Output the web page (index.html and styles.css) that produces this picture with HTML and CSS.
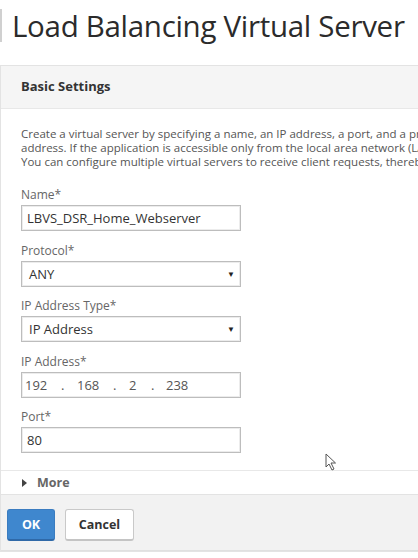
FILE: index.html
```html
<!DOCTYPE html>
<html>
<head>
<meta charset="utf-8">
<link rel="stylesheet" href="styles.css">
</head>
<body>
<div class="page">
  <h1 class="title">Load Balancing Virtual Server</h1>
  <div class="panel">
    <div class="panel-head">Basic Settings</div>
    <div class="panel-body">
      <p class="desc">
        <span class="line">Create a virtual server by specifying a name, an IP address, a port, and a protocol type. If an application is accessible from the Internet, the virtual server IP (VIP) address is a public IP</span>
        <span class="line">address. If the application is accessible only from the local area network (LAN) or wide area network (WAN), the VIP is usually a private (ICANN non-routable) IP address.</span>
        <span class="line">You can configure multiple virtual servers to receive client requests, thereby increasing the availability of resources to process client requests.</span>
      </p>
      <div class="field">
        <div class="label">Name*</div>
        <div class="input">LBVS_DSR_Home_Webserver</div>
      </div>
      <div class="field">
        <div class="label">Protocol*</div>
        <div class="input select">ANY<span class="arrow">▼</span></div>
      </div>
      <div class="field">
        <div class="label">IP Address Type*</div>
        <div class="input select">IP Address<span class="arrow">▼</span></div>
      </div>
      <div class="field">
        <div class="label">IP Address*</div>
        <div class="input ip"><span class="oct w1">192</span><span class="dot">.</span><span class="oct w1">168</span><span class="dot">.</span><span class="oct w2">2</span><span class="dot d3">.</span><span class="oct">238</span></div>
      </div>
      <div class="field">
        <div class="label">Port*</div>
        <div class="input">80</div>
      </div>
    </div>
    <div class="more"><span class="tri"></span>More</div>
    <div class="footer">
      <button class="btn ok">OK</button>
      <button class="btn cancel">Cancel</button>
    </div>
  </div>
  <svg class="cursor" width="12" height="18" viewBox="0 0 12 18"><path d="M1 1 L1 14 L4 11 L7 17 L9 16 L6 10 L10.5 10 Z" fill="#fff" stroke="#555" stroke-width="1"/></svg>
</div>
</body>
</html>
```
FILE: styles.css
```css
html, body {
  margin: 0;
  padding: 0;
  background: #fff;
  overflow: hidden;
}
body {
  font-family: "Open Sans", "Liberation Sans", sans-serif;
  color: #333;
  width: 418px;
  height: 558px;
}
.page {
  position: relative;
  width: 418px;
  height: 558px;
  overflow: hidden;
}
.title {
  margin: 0;
  padding: 8px 0 0 12px;
  height: 56px;
  box-sizing: border-box;
  font-weight: 400;
  font-size: 29.5px;
  line-height: 36px;
  letter-spacing: -0.3px;
  color: #2b2b2b;
  white-space: nowrap;
  position: relative;
}
.title::before {
  content: "";
  position: absolute;
  left: 0;
  top: 9px;
  width: 2px;
  height: 33px;
  background: #d0d0d0;
}
.panel {
  margin-top: 9px;
  width: 640px;
  border: 1px solid #e3e3e3;
  border-right: none;
}
.panel-head {
  background: #f5f5f5;
  height: 42px;
  line-height: 40px;
  padding-left: 20px;
  font-weight: 700;
  font-size: 13px;
  color: #333;
  border-bottom: 1px solid #e8e8e8;
}
.panel-body {
  padding: 18px 0 6.5px 20px;
}
.desc {
  margin: 0 0 17px;
  font-size: 11.5px;
  line-height: 14px;
  color: #555;
}
.line {
  display: block;
  white-space: nowrap;
}
.field {
  margin-bottom: 10.5px;
}
.label {
  font-size: 12px;
  line-height: 18px;
  color: #666;
  margin-bottom: 1px;
}
.input {
  width: 220px;
  height: 26px;
  box-sizing: border-box;
  border: 1px solid #bdbdbd;
  box-shadow: inset 0 0 0 1px #ececec;
  padding: 0 5px;
  font-size: 13px;
  line-height: 24px;
  color: #333;
  position: relative;
}
.select {
  padding-left: 7px;
}
.arrow {
  position: absolute;
  right: 5px;
  top: 0;
  font-size: 8px;
  color: #222;
}
.ip {
  display: flex;
  color: #555;
  padding-left: 3px;
}
.w1 { width: 33px; }
.w2 { width: 19px; }
.dot { width: 19px; padding-left: 3px; box-sizing: border-box; }
.d3 { width: 18px; }
.more {
  border-top: 1px solid #e8e8e8;
  height: 23px;
  line-height: 23px;
  padding-left: 21px;
  font-weight: 700;
  font-size: 12.5px;
  color: #666;
  display: flex;
  align-items: center;
}
.tri {
  width: 0;
  height: 0;
  border-top: 4px solid transparent;
  border-bottom: 4px solid transparent;
  border-left: 5px solid #444;
  margin-right: 10px;
}
.footer {
  background: #f2f2f2;
  border-top: 1px solid #e3e3e3;
  border-bottom: 1px solid #e0e0e0;
  height: 57px;
  box-sizing: border-box;
  padding: 14px 0 0 6px;
  display: flex;
  gap: 10px;
  align-items: flex-start;
}
.btn {
  height: 32px;
  border-radius: 3px;
  font-family: "Open Sans", "Liberation Sans", sans-serif;
  font-weight: 700;
  font-size: 12.5px;
  padding: 0;
  cursor: pointer;
}
.ok {
  width: 48px;
  background: #3f87ce;
  border: 1px solid #3a7cc0;
  border-bottom: 2px solid #2f69a8;
  color: #fff;
}
.cancel {
  width: 69px;
  background: #fff;
  border: 1px solid #c9c9c9;
  border-bottom: 2px solid #c4c4c4;
  color: #333;
}
.cursor {
  position: absolute;
  left: 325px;
  top: 453px;
}
```
